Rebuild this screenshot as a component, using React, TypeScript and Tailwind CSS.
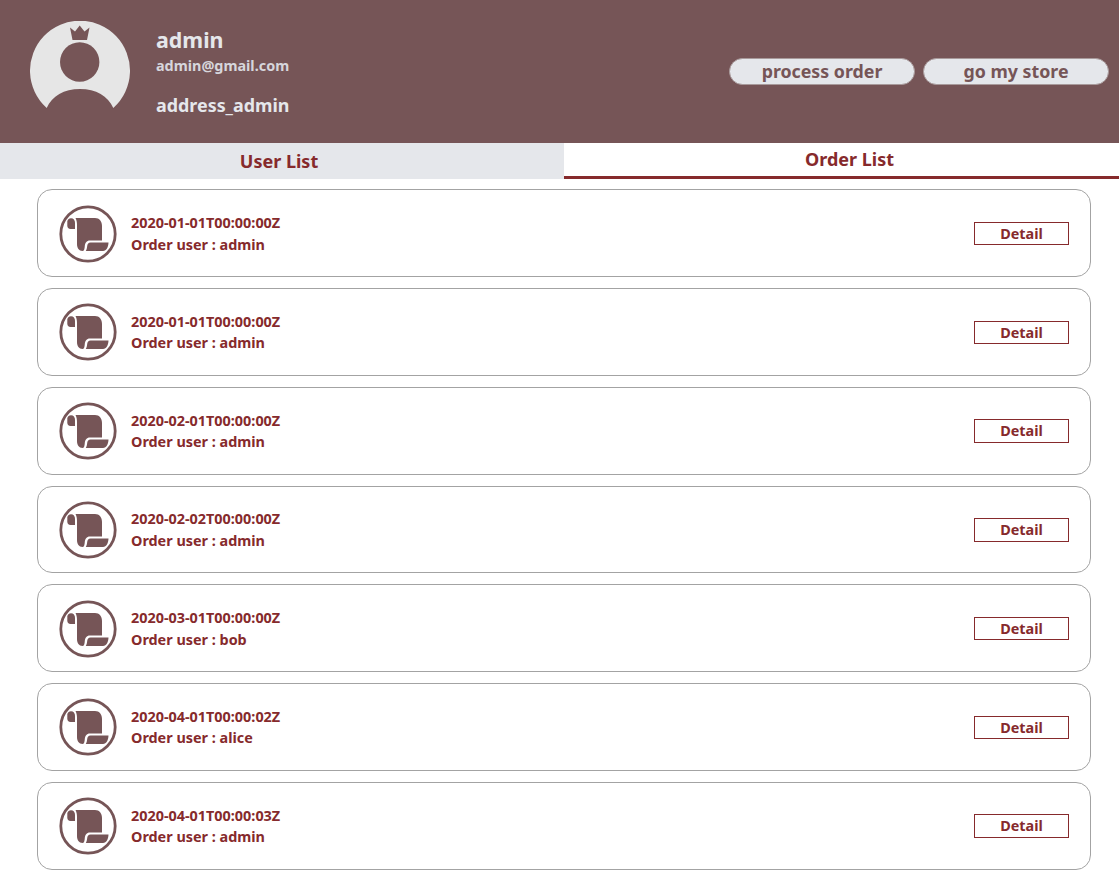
import React from "react";

const orders = [
  { date: "2020-01-01T00:00:00Z", user: "admin" },
  { date: "2020-01-01T00:00:00Z", user: "admin" },
  { date: "2020-02-01T00:00:00Z", user: "admin" },
  { date: "2020-02-02T00:00:00Z", user: "admin" },
  { date: "2020-03-01T00:00:00Z", user: "bob" },
  { date: "2020-04-01T00:00:02Z", user: "alice" },
  { date: "2020-04-01T00:00:03Z", user: "admin" },
];

function Avatar() {
  return (
    <svg width="100" height="100" viewBox="0 0 100 100" className="shrink-0">
      <path
        d="M16.7 87 A50 50 0 1 1 83.3 87 C78 75 66 68 50 68 C34 68 22 75 16.7 87 Z"
        fill="#e6e6e6"
      />
      <circle cx="49.7" cy="41" r="19.7" fill="#765557" />
      <path
        d="M42.5 19 L40 6.5 L45 10.5 L49.7 4.5 L54.5 10.5 L59.5 6.5 L57 19 Z"
        fill="#765557"
      />
    </svg>
  );
}

function ScrollIcon() {
  return (
    <svg width="58" height="58" viewBox="0 0 58 58" className="shrink-0">
      <circle cx="29" cy="29" r="27.2" fill="none" stroke="#765557" strokeWidth="2.8" />
      <path
        d="M8.3 16.5 C8.3 14.5 10 13.2 12 13.2 C14.5 13.2 16 15 16 18 L16 24 L11.5 24 C9.5 24 8.3 22.5 8.3 20.5 Z"
        fill="#765557"
      />
      <path
        d="M16.5 13 L36 13 C40.5 13 43 16.5 43 21 L43 35.5 L31 35.5 C27.5 35.5 26 38 25.8 41 C25.6 44 25 46 23.5 46 C20 46 18 43 18 39 L18 20 C18 17 17.5 15 16.5 13 Z"
        fill="#765557"
      />
      <path
        d="M31.5 37.5 L49.5 37.5 C49.3 42 47.5 46 44 46 L26.8 46 C27.8 44.5 28 42.5 28.2 41 C28.5 38.8 29.5 37.5 31.5 37.5 Z"
        fill="#765557"
      />
    </svg>
  );
}

function OrderCard({ date, user }: { date: string; user: string }) {
  return (
    <div className="mb-[11px] flex h-[87.75px] items-center rounded-[15px] border border-[#a3a3a3] bg-white px-[21px] pt-[1px]">
      <ScrollIcon />
      <div className="ml-[14px] flex-1 text-[14.4px] font-bold leading-[21.6px] text-[#862a2c]">
        <div>{date}</div>
        <div>Order user : {user}</div>
      </div>
      <button className="h-[23.5px] w-[95px] border border-[#862a2c] text-[14.4px] font-bold leading-[21.6px] text-[#862a2c]">
        Detail
      </button>
    </div>
  );
}

export default function App() {
  return (
    <div className="min-h-[876px] bg-white font-['Noto_Sans',sans-serif]">
      {/* header */}
      <div className="flex h-[143px] bg-[#765557] pl-[30px] pr-[10px]">
        <div className="mt-[21px]">
          <Avatar />
        </div>
        <div className="ml-[26px] mt-[26px] flex-1 font-bold text-[#e5e7eb]">
          <div className="text-[21.4px] leading-[28.5px]">admin</div>
          <div className="text-[14.4px] leading-[21.6px] text-[#d6d6dc]">admin@gmail.com</div>
          <div className="mt-[15.5px] text-[17.9px] leading-[26.4px]">address_admin</div>
        </div>
        <div className="mt-[58px] flex gap-[8px]">
          <button className="h-[27px] w-[186px] rounded-full border border-[#a89a9b] bg-[#e5e7eb] text-[17.8px] font-bold leading-[25px] text-[#765557]">
            process order
          </button>
          <button className="h-[27px] w-[186px] rounded-full border border-[#a89a9b] bg-[#e5e7eb] text-[17.8px] font-bold leading-[25px] text-[#765557]">
            go my store
          </button>
        </div>
      </div>

      {/* tabs */}
      <div className="flex h-[36px]">
        <div className="flex w-[564px] items-center justify-center bg-[#e5e7eb] pr-[6px] text-[18px] font-bold text-[#862a2c]">
          User List
        </div>
        <div className="flex flex-1 items-center justify-center border-b-[3px] border-[#862a2c] bg-white pl-[16px] pb-[1px] text-[18px] font-bold text-[#862a2c]">
          Order List
        </div>
      </div>

      {/* orders */}
      <div className="mx-[37px] mt-[10.25px] w-[1054px]">
        {orders.map((order, index) => (
          <OrderCard key={index} date={order.date} user={order.user} />
        ))}
      </div>
    </div>
  );
}
